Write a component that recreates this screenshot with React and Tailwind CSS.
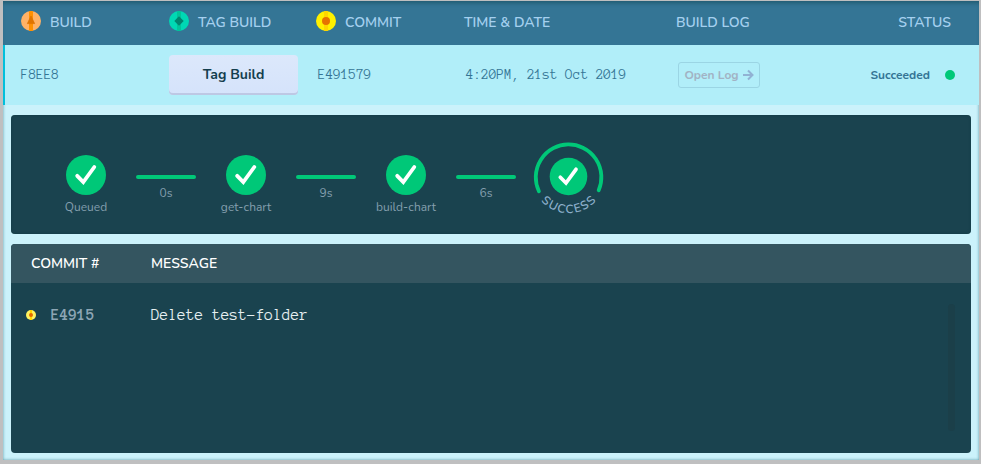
import React from "react";

const COLUMNS = "grid grid-cols-[148px_147px_148px_212px_1fr] items-center";
const SANS = "font-['Nunito','Lato','Liberation_Sans',sans-serif]";
const MONO = "font-['Anonymous_Pro','Liberation_Mono',monospace]";

function Badge({ kind }) {
  const colors = {
    build: ["#ffb266", "#ff9100", "#e07400"],
    tag: ["#00d8b4", "#00c49a", "#008570"],
    commit: ["#fff000", "#ffd500", "#e67300"],
  }[kind];
  return (
    <svg className="size-5 shrink-0" viewBox="0 0 20 20">
      <circle cx="10" cy="10" r="10" fill={colors[0]} />
      <path d="M8 .2a10 10 0 0 1 4 0v19.6a10 10 0 0 1-4 0z" fill={colors[1]} />
      {kind === "build" && <path d="M10 5 13.6 12.6H6.4z" fill={colors[2]} stroke={colors[2]} strokeWidth=".8" strokeLinejoin="round" />}
      {kind === "tag" && <path d="M10 5.3 14.7 10 10 14.7 5.3 10z" fill={colors[2]} />}
      {kind === "commit" && <circle cx="10" cy="10" r="4" fill={colors[2]} />}
    </svg>
  );
}

function Heading({ kind, children }) {
  return (
    <div className="flex items-center gap-[9px]">
      <Badge kind={kind} />
      <span className="pt-[2px]">{children}</span>
    </div>
  );
}

function Step({ label }) {
  return (
    <div className="flex w-[100px] flex-col items-center">
      <svg className="size-10" viewBox="0 0 40 40">
        <circle cx="20" cy="20" r="20" fill="#00c878" />
        <path d="M11.2 20.8 17.3 27 28.3 12" fill="none" stroke="#fff" strokeWidth="3.8" strokeLinecap="round" />
      </svg>
      <span className="mt-1 text-[12px] leading-4">{label}</span>
    </div>
  );
}

function Connector({ time }) {
  return (
    <div className="mt-5 flex w-[60px] flex-col items-center">
      <div className="h-1 w-full rounded-full bg-[#00c878]" />
      <span className="mt-[6px] text-[12px] leading-4">{time}</span>
    </div>
  );
}

function Success() {
  return (
    <svg className="-mt-5 ml-3 h-[84px] w-20" viewBox="0 0 80 84">
      <path d="M10.9 56.2A32.8 32.8 0 1 1 70.7 55.2" fill="none" stroke="#00c878" strokeWidth="3.8" strokeLinecap="round" />
      <circle cx="40.5" cy="41.5" r="18.8" fill="#00c878" />
      <path d="M32.3 42.3 38 48 48 34.3" fill="none" stroke="#fff" strokeWidth="3.7" strokeLinecap="round" />
      <path id="success-arc" d="M4.5 51.2A37.5 37.5 0 0 0 76.5 51.2" fill="none" />
      <text className="font-['Nunito','Lato',sans-serif] text-[12px] font-semibold" fill="#8cafcb" textAnchor="middle" textLength="62">
        <textPath href="#success-arc" startOffset="50%" textLength="62">SUCCESS</textPath>
      </text>
    </svg>
  );
}

export default function App() {
  return (
    <div className={`h-[464px] w-[981px] overflow-hidden bg-[#bfbfc0] pt-px pr-[2px] pb-1 pl-[3px] ${SANS}`}>
      <main className="h-[459px] bg-[#cbf2fb] shadow-[inset_0_0_3px_#5c99a7]">
        <header className={`${COLUMNS} h-11 bg-[#347595] pr-7 pb-1 pl-[18px] text-[14px] font-semibold text-[#a5d0ef] shadow-[inset_0_4px_4px_-2px_#205a70]`}>
          <Heading kind="build">BUILD</Heading>
          <Heading kind="tag">TAG BUILD</Heading>
          <Heading kind="commit">COMMIT</Heading>
          <span className="pt-[2px]">TIME &amp; DATE</span>
          <div className="flex justify-between pt-[2px]"><span>BUILD LOG</span><span>STATUS</span></div>
        </header>

        <section className={`${COLUMNS} h-[60px] border-l-2 border-[#00bfdc] bg-[#b1eef9] pr-6 pl-4 text-[#347595]`}>
          <span className={`${MONO} pt-px text-[14px]`}>F8EE8</span>
          <button className="h-10 w-[129px] rounded bg-linear-to-b from-[#dce8fb] to-[#d5e3fb] pb-[2px] text-[14px] font-bold text-[#143e4e] shadow-[inset_0_-2px_0_#bdc8e4]">Tag Build</button>
          <span className={`${MONO} pt-px pl-[2px] text-[14px]`}>E491579</span>
          <span className={`${MONO} pt-px pl-[2px] text-[14px]`}>4:20PM, 21st Oct 2019</span>
          <div className="flex items-center justify-between pl-[2px]">
            <button className="flex h-[26px] w-[82px] items-center justify-center gap-1 rounded-[3px] border border-[#9bd5e4] text-[12px] font-bold text-[#a2b3c4]">
              <span>Open Log</span>
              <svg className="h-3 w-[11px]" viewBox="0 0 11 12" fill="none" stroke="#91b2d3" strokeWidth="2">
                <path d="M0 6h9M5 1.5 9.5 6 5 10.5" />
              </svg>
            </button>
            <div className="flex items-center gap-[15px] text-[12px] font-bold">
              <span>Succeeded</span><span className="size-[10px] rounded-full bg-[#00c878]" />
            </div>
          </div>
        </section>

        <section className="mx-2 mt-[10px] flex h-[119px] items-start rounded bg-[#1a434f] pt-10 pl-[25px] text-[#849fae] shadow-[inset_0_0_3px_#123b44]">
          <Step label="Queued" />
          <Connector time="0s" />
          <Step label="get-chart" />
          <Connector time="9s" />
          <Step label="build-chart" />
          <Connector time="6s" />
          <Success />
        </section>

        <section className="mx-2 mt-[10px] h-[209px] overflow-hidden rounded bg-[#1a434f]">
          <div className="grid h-[39px] grid-cols-[120px_1fr] items-center bg-[#345560] pl-5 text-[14px] font-semibold text-white">
            <span>COMMIT #</span><span>MESSAGE</span>
          </div>
          <div className="flex justify-between pt-[21px] pr-4 pl-[15px]">
            <div className={`flex h-[22px] items-center text-[16px] ${MONO}`}>
              <svg className="size-[10px]" viewBox="0 0 10 10">
                <circle cx="5" cy="5" r="5" fill="#fff25e" />
                <path d="M4 0h2v10H4z" fill="#ffd500" />
                <circle cx="5" cy="5" r="2" fill="#e46b00" />
              </svg>
              <span className="ml-[15px] w-[100px] font-bold text-[#8da6b5]">E4915</span>
              <span className="text-[#e6eff1]">Delete test-folder</span>
            </div>
            <div className="h-[127px] w-[7px] rounded-full bg-[#1b3f49]" />
          </div>
        </section>
      </main>
    </div>
  );
}
